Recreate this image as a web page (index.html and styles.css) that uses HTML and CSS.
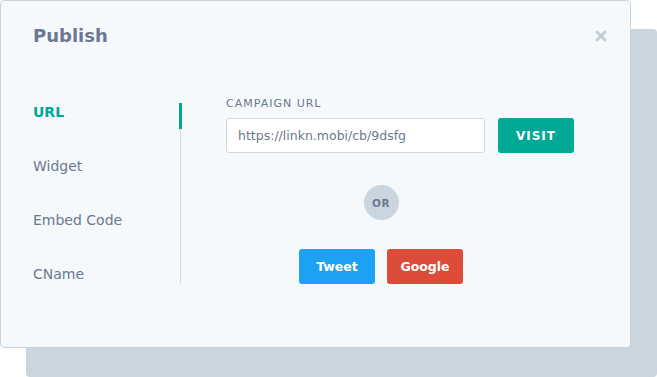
FILE: index.html
```html
<!DOCTYPE html>
<html lang="en">
<head>
    <meta charset="UTF-8">
    <title>Publish</title>
    <link rel="stylesheet" href="styles.css">
</head>
<body>
    <div class="stage">
        <div class="backdrop"></div>
        <div class="modal">
            <div class="modal-head">
                <h1>Publish</h1>
                <svg class="close" width="12" height="12" viewBox="0 0 12 12">
                    <path d="M2 2 L10 10 M10 2 L2 10" stroke="#c5cdd7" stroke-width="3" stroke-linecap="round"/>
                </svg>
            </div>
            <div class="modal-body">
                <ul class="tabs">
                    <li class="active">URL</li>
                    <li>Widget</li>
                    <li>Embed Code</li>
                    <li>CName</li>
                </ul>
                <div class="panel">
                    <div class="field">
                        <label>CAMPAIGN URL</label>
                        <div class="field-row">
                            <input class="url" type="text" value="https://linkn.mobi/cb/9dsfg">
                            <button class="btn visit">VISIT</button>
                        </div>
                    </div>
                    <div class="or">OR</div>
                    <div class="share">
                        <button class="btn tweet">Tweet</button>
                        <button class="btn google">Google</button>
                    </div>
                </div>
            </div>
        </div>
    </div>
</body>
</html>
```

FILE: styles.css
```css
body {
    margin: 0;
    background: #fff;
    font-family: "DejaVu Sans", sans-serif;
    color: #6b7891;
}
.stage {
    position: relative;
    width: 657px;
    height: 377px;
}
.backdrop {
    position: absolute;
    left: 26px;
    top: 29px;
    right: 0;
    bottom: 0;
    background: #cbd5df;
    border-radius: 4px;
}
.modal {
    position: absolute;
    left: 0;
    top: 0;
    width: 629px;
    height: 346px;
    background: #f5f9fc;
    border: 1px solid #c9d3de;
    border-radius: 4px;
}
.modal-head {
    display: flex;
    justify-content: space-between;
    align-items: center;
    padding: 24px 23px 0 32px;
}
h1 {
    margin: 0;
    font-size: 18px;
    font-weight: bold;
    color: #6b7891;
}
.modal-body {
    display: flex;
    margin-top: 57px;
    padding-left: 32px;
}
.tabs {
    list-style: none;
    margin: 0;
    padding: 0;
    width: 147px;
    height: 180px;
    border-right: 1px solid #d0d8e0;
    position: relative;
}
.tabs li {
    font-size: 14px;
    height: 54px;
    line-height: 18px;
}
.tabs li.active {
    color: #00a896;
    font-weight: 600;
}
.tabs::after {
    content: "";
    position: absolute;
    right: -2px;
    top: 0;
    width: 3px;
    height: 26px;
    background: #00a896;
}
.panel {
    width: 400px;
    display: flex;
    flex-direction: column;
    align-items: center;
}
.field {
    align-self: flex-start;
    margin-left: 45px;
}
label {
    display: block;
    font-size: 11px;
    letter-spacing: 1px;
    line-height: 14px;
    margin-top: -6px;
}
.field-row {
    display: flex;
    gap: 13px;
    margin-top: 7px;
}
.url {
    width: 246px;
    height: 33px;
    padding: 0 0 0 11px;
    border: 1px solid #d3dae2;
    border-radius: 3px;
    background: #fff;
    font-family: inherit;
    font-size: 12.5px;
    color: #6b7891;
    outline: none;
}
.btn {
    border: 0;
    border-radius: 3px;
    color: #fff;
    font-family: inherit;
    font-weight: bold;
    height: 35px;
    width: 76px;
}
.visit {
    height: 35px;
    background: #00a896;
    font-size: 12px;
    letter-spacing: 1px;
}
.or {
    width: 35px;
    height: 35px;
    border-radius: 50%;
    background: #cbd5df;
    font-size: 10.5px;
    font-weight: 600;
    letter-spacing: 0.5px;
    display: flex;
    align-items: center;
    justify-content: center;
    margin-top: 32px;
}
.share {
    display: flex;
    gap: 12px;
    margin-top: 29px;
}
.tweet {
    background: #1da1f2;
    font-size: 12.5px;
}
.google {
    background: #dd4b39;
    font-size: 12.5px;
}
```
